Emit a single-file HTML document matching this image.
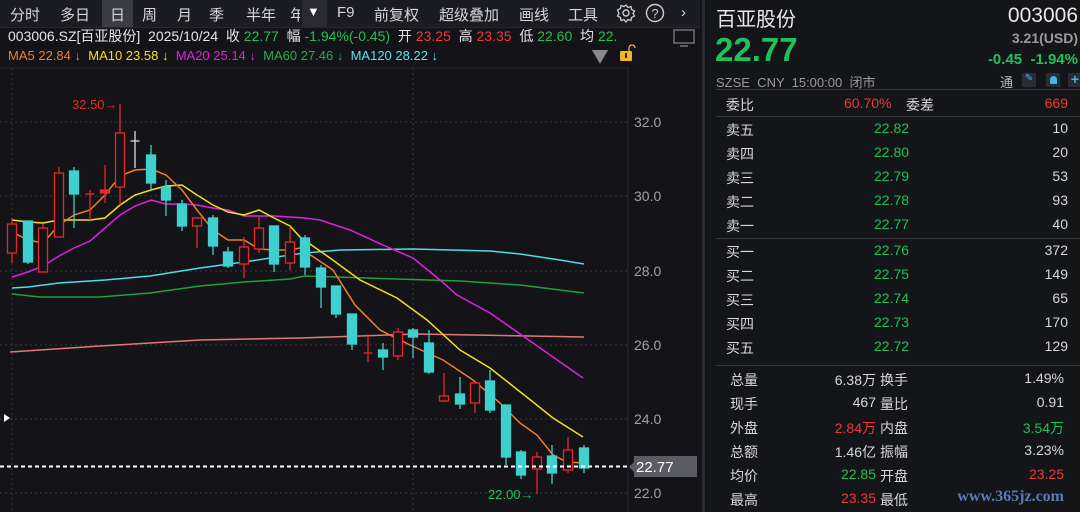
<!DOCTYPE html>
<html><head><meta charset="utf-8">
<style>
*{margin:0;padding:0;box-sizing:border-box}
body{width:1080px;height:512px;background:#131318;overflow:hidden;position:relative;font-family:"Liberation Sans","Noto Sans CJK SC",sans-serif;color:#d8d8dc}
.a{position:absolute;white-space:nowrap}
.tb{position:absolute;left:0;top:0;width:700px;height:27px;background:#1b1c21;font-size:15px;color:#d6d6da}
.tb span{position:absolute;top:4px}
.g{color:#1fc15a}.r{color:#f0373a}.w{color:#e6e6e9}.gr{color:#9a9aa0}
.rp{position:absolute;left:706px;top:0;width:374px;height:512px;background:#141519}
.row{position:absolute;left:20px;width:342px;height:24px;font-size:14px}
.row span{position:absolute;top:2px}
</style></head><body>
<div class="tb">
<div class="a" style="left:102px;top:0;width:31px;height:27px;background:#3b3c44"></div>
<span style="left:10px">分时</span><span style="left:60px">多日</span><span style="left:110px">日</span><span style="left:142px">周</span><span style="left:177px">月</span><span style="left:209px">季</span><span style="left:246px">半年</span><span style="left:290px;width:10px;overflow:hidden">年</span>
<div class="a" style="left:302px;top:0;width:25px;height:27px;background:#2a2b31"></div>
<span style="left:307px;font-size:13px;color:#fff">▼</span>
<span style="left:337px">F9</span><span style="left:374px">前复权</span><span style="left:439px">超级叠加</span><span style="left:519px">画线</span><span style="left:568px">工具</span>
<svg class="a" style="left:616px;top:3px" width="20" height="20" viewBox="0 0 20 20"><circle cx="10" cy="10" r="3" fill="none" stroke="#ccc" stroke-width="1.4"/><path d="M10 2l2 2.5 3-1 .5 3 3 1.5-1.5 2.5 1.5 2.5-3 1.5-.5 3-3-1-2 2.5-2-2.5-3 1-.5-3-3-1.5 1.5-2.5L1.5 7l3-1.5.5-3 3 1z" fill="none" stroke="#ccc" stroke-width="1.3"/></svg>
<svg class="a" style="left:645px;top:3px" width="20" height="20"><circle cx="10" cy="10" r="8.5" fill="none" stroke="#ccc" stroke-width="1.4"/><text x="10" y="15" font-size="13" text-anchor="middle" fill="#ccc" font-family="Liberation Sans">?</text></svg>
<span style="left:681px">›</span>
</div>
<div class="a" style="left:0;top:27px;width:700px;height:1px;background:#26272c"></div>
<div class="a" style="left:8px;top:26px;font-size:14px;color:#e6e6e9">003006.SZ[百亚股份] &nbsp;2025/10/24 &nbsp;收 <span class="g">22.77</span> &nbsp;幅 <span class="g">-1.94%(-0.45)</span> &nbsp;开 <span class="r">23.25</span> &nbsp;高 <span class="r">23.35</span> &nbsp;低 <span class="g">22.60</span> &nbsp;均 <span class="g">22.</span></div>
<div class="a" style="left:8px;top:48px;font-size:13px"><span style="color:#f07f2a">MA5 22.84 ↓</span>&nbsp; <span style="color:#f0e020">MA10 23.58 ↓</span>&nbsp; <span style="color:#e020e0">MA20 25.14 ↓</span>&nbsp; <span style="color:#20b050">MA60 27.46 ↓</span>&nbsp; <span style="color:#50e8f0">MA120 28.22 ↓</span></div>
<svg class="a" style="left:0;top:0" width="705" height="512">
<polygon points="592,50 608,50 600,64" fill="#888"/>
<rect x="620" y="51" width="12" height="10" rx="1" fill="#f0b428"/><path d="M629 51v-3a3 3 0 0 1 6 0" fill="none" stroke="#f0b428" stroke-width="1.3"/><rect x="625" y="53" width="2" height="5" fill="#3a2a00"/>
<rect x="674" y="30" width="20" height="13" fill="none" stroke="#888" stroke-width="1.2"/><path d="M680 46h8" stroke="#888" stroke-width="1.3"/>
<line x1="0" y1="68" x2="628" y2="68" stroke="#26272c"/>
<line x1="628" y1="68" x2="628" y2="512" stroke="#2a2b30"/>
<line x1="703.5" y1="0" x2="703.5" y2="512" stroke="#2a2b30" stroke-width="3"/>
<g stroke="#3a3b42" stroke-dasharray="2,3" stroke-width="1">
<line x1="0" y1="122" x2="628" y2="122"/><line x1="0" y1="196" x2="628" y2="196"/><line x1="0" y1="271" x2="628" y2="271"/><line x1="0" y1="345" x2="628" y2="345"/><line x1="0" y1="419" x2="628" y2="419"/><line x1="0" y1="493" x2="628" y2="493"/>
<line x1="12" y1="68" x2="12" y2="512"/><line x1="413" y1="68" x2="413" y2="512"/>
</g>
<g font-size="14" fill="#a0a0a6" font-family="Liberation Sans"><text x="634" y="127">32.0</text><text x="634" y="201">30.0</text><text x="634" y="276">28.0</text><text x="634" y="350">26.0</text><text x="634" y="424">24.0</text><text x="634" y="498">22.0</text></g>
<g fill="none" stroke-width="1.5">
<polyline stroke="#e07878" points="10,352 100,346 200,340 300,338 417,334 584,337"/>
<polyline stroke="#1fa040" points="12,294 40,297 100,297 150,293 200,286 244,282 290,279 305,276 460,281 520,285 584,293"/>
<polyline stroke="#50dce8" points="12,288 28,287 59,283 105,280 150,276 200,268 244,262 290,255 305,253 340,250 413,249 490,251 520,254 560,260 584,264"/>
<polyline stroke="#e020e0" points="12,277 28,272 43,266 59,256 74,248 90,241 105,228 120,215 135,206 151,200 166,204 182,204 197,205 213,208 228,210 244,216 259,216 274,216 290,217 305,218 320,220 350,230 383,245 413,258 440,280 457,295 490,313 533,343 583,378"/>
<polyline stroke="#f0e020" points="12,220 28,222 43,223 59,220 74,220 90,220 105,218 120,205 135,195 151,190 166,186 182,185 197,195 213,205 228,212 244,215 259,210 274,218 290,226 300,237 330,258 360,280 397,298 427,320 460,350 490,368 533,402 553,418 583,437"/>
<polyline stroke="#f07f2a" points="12,232 28,240 43,243 59,225 74,215 90,210 105,195 120,176 135,170 151,169 166,175 182,190 197,210 213,230 228,240 244,240 259,249 274,250 290,250 300,248 333,270 355,305 380,330 410,345 443,360 473,380 500,403 520,423 537,435 553,455 567,462 583,463"/>
</g>
<g stroke="#3ecfcf" fill="#3ecfcf" stroke-width="1.3">
<line x1="28" y1="221" x2="28" y2="264"/><rect x="23.5" y="221" width="9" height="41"/>
<line x1="74" y1="167" x2="74" y2="228"/><rect x="69.5" y="171" width="9" height="23"/>
<line x1="151" y1="145" x2="151" y2="189"/><rect x="146.5" y="155" width="9" height="28"/>
<line x1="166" y1="180" x2="166" y2="216"/><rect x="161.5" y="187" width="9" height="13"/>
<line x1="182" y1="200" x2="182" y2="231"/><rect x="177.5" y="204" width="9" height="22"/>
<line x1="213" y1="215" x2="213" y2="255"/><rect x="208.5" y="218" width="9" height="28"/>
<line x1="228" y1="247" x2="228" y2="268"/><rect x="223.5" y="252" width="9" height="14"/>
<line x1="274" y1="226" x2="274" y2="272"/><rect x="269.5" y="226" width="9" height="38"/>
<line x1="305" y1="235" x2="305" y2="275"/><rect x="300.5" y="238" width="9" height="29"/>
<line x1="321" y1="265" x2="321" y2="308"/><rect x="316.5" y="268" width="9" height="19"/>
<line x1="336" y1="286" x2="336" y2="318"/><rect x="331.5" y="286" width="9" height="28"/>
<line x1="352" y1="314" x2="352" y2="350"/><rect x="347.5" y="314" width="9" height="30"/>
<line x1="383" y1="343" x2="383" y2="370"/><rect x="378.5" y="350" width="9" height="7"/>
<line x1="413" y1="328" x2="413" y2="358"/><rect x="408.5" y="330" width="9" height="7"/>
<line x1="429" y1="330" x2="429" y2="374"/><rect x="424.5" y="343" width="9" height="29"/>
<line x1="460" y1="377" x2="460" y2="409"/><rect x="455.5" y="394" width="9" height="10"/>
<line x1="490" y1="370" x2="490" y2="413"/><rect x="485.5" y="381" width="9" height="29"/>
<line x1="506" y1="405" x2="506" y2="465"/><rect x="501.5" y="405" width="9" height="52"/>
<line x1="521" y1="450" x2="521" y2="479"/><rect x="516.5" y="452" width="9" height="23"/>
<line x1="552" y1="445" x2="552" y2="484"/><rect x="547.5" y="456" width="9" height="17"/>
<line x1="584" y1="445" x2="584" y2="473"/><rect x="579.5" y="448" width="9" height="20"/>
</g>
<g stroke="#e8282b" fill="#131318" stroke-width="1.3">
<line x1="12" y1="218" x2="12" y2="263"/><rect x="7.5" y="224" width="9" height="29"/>
<line x1="43" y1="224" x2="43" y2="272"/><rect x="38.5" y="228" width="9" height="44"/>
<line x1="59" y1="167" x2="59" y2="237"/><rect x="54.5" y="173" width="9" height="64"/>
<line x1="90" y1="190" x2="90" y2="220"/><line x1="85.5" y1="194" x2="94.5" y2="194"/>
<line x1="105" y1="165" x2="105" y2="203"/><rect x="100.5" y="190" width="9" height="3" fill="#e8282b"/>
<line x1="120" y1="104" x2="120" y2="205"/><rect x="115.5" y="133" width="9" height="54"/>
<line x1="197" y1="217" x2="197" y2="248"/><rect x="192.5" y="218" width="9" height="8"/>
<line x1="244" y1="237" x2="244" y2="278"/><rect x="239.5" y="247" width="9" height="17"/>
<line x1="259" y1="217" x2="259" y2="253"/><rect x="254.5" y="228" width="9" height="21"/>
<line x1="290" y1="228" x2="290" y2="270"/><rect x="285.5" y="242" width="9" height="21"/>
<line x1="368" y1="334" x2="368" y2="362"/><line x1="363.5" y1="353" x2="372.5" y2="353"/>
<line x1="398" y1="328" x2="398" y2="360"/><rect x="393.5" y="332" width="9" height="24"/>
<line x1="444" y1="373" x2="444" y2="402"/><rect x="439.5" y="396" width="9" height="5"/>
<line x1="475" y1="383" x2="475" y2="413"/><rect x="470.5" y="383" width="9" height="20"/>
<line x1="537" y1="452" x2="537" y2="494"/><rect x="532.5" y="457" width="9" height="12"/>
<line x1="568" y1="437" x2="568" y2="473"/><rect x="563.5" y="450" width="9" height="20"/>
</g>
<line x1="135" y1="131" x2="135" y2="168" stroke="#ddd" stroke-width="1.3"/><line x1="130.5" y1="141" x2="139.5" y2="141" stroke="#ddd" stroke-width="1.3"/>
<text x="72" y="109" font-size="13" fill="#e8282b" font-family="Liberation Sans">32.50→</text>
<text x="488" y="499" font-size="13" fill="#1fc15a" font-family="Liberation Sans">22.00→</text>
<line x1="0" y1="466.5" x2="632" y2="466.5" stroke="#fff" stroke-width="2" stroke-dasharray="4,3"/>
<polygon points="629,467 634,462 634,472" fill="#5a5b63"/>
<rect x="634" y="456" width="63" height="21" fill="#5a5b63"/>
<text x="636" y="472" font-size="15" fill="#fff" font-family="Liberation Sans">22.77</text>
<polygon points="4,414 10,418 4,422" fill="#fff"/>
</svg>
<div class="rp">
<div class="a" style="left:10px;top:3px;font-size:20px;color:#e8e8ea">百亚股份</div>
<div class="a" style="right:2px;top:4px;font-size:21px;color:#e8e8ea">003006</div>
<div class="a" style="left:9px;top:31px;font-size:33px;font-weight:bold;color:#1fc15a">22.77</div>
<div class="a gr" style="right:2px;top:30px;font-size:14px;font-weight:bold">3.21(USD)</div>
<div class="a g" style="right:2px;top:51px;font-size:15px;font-weight:bold">-0.45 &nbsp;-1.94%</div>
<div class="a gr" style="left:10px;top:72px;font-size:13px">SZSE &nbsp;CNY &nbsp;15:00:00 &nbsp;闭市</div>
<div class="a" style="left:294px;top:72px;font-size:13px;color:#bbb">通</div>
<div class="a" style="left:316px;top:73px;width:14px;height:14px;background:#2a2c33;color:#3ab8e8;font-size:10px;text-align:center">✎</div>
<div class="a" style="left:340px;top:73px;width:14px;height:14px;background:#2a2c33"><div style="margin:3px auto;width:7px;height:8px;background:#3ab8e8;border-radius:4px 4px 1px 1px"></div></div>
<div class="a" style="left:362px;top:73px;width:14px;height:14px;background:#2a2c33;color:#3ab8e8;font-size:14px;line-height:13px;text-align:center;font-weight:bold">+</div>
<div class="a" style="left:10px;top:89px;width:364px;height:1px;background:#33343a"></div>
<div class="row" style="top:93px"><span style="left:0">委比</span><span class="r" style="left:118px">60.70%</span><span style="left:180px">委差</span><span class="r" style="right:0">669</span></div>
<div class="a" style="left:10px;top:116px;width:364px;height:1px;background:#33343a"></div>
<div class="row" style="top:118px"><span>卖五</span><span class="g" style="left:148px">22.82</span><span style="right:0">10</span></div>
<div class="row" style="top:142px"><span>卖四</span><span class="g" style="left:148px">22.80</span><span style="right:0">20</span></div>
<div class="row" style="top:166px"><span>卖三</span><span class="g" style="left:148px">22.79</span><span style="right:0">53</span></div>
<div class="row" style="top:190px"><span>卖二</span><span class="g" style="left:148px">22.78</span><span style="right:0">93</span></div>
<div class="row" style="top:214px"><span>卖一</span><span class="g" style="left:148px">22.77</span><span style="right:0">40</span></div>
<div class="a" style="left:10px;top:238px;width:364px;height:1px;background:#33343a"></div>
<div class="row" style="top:240px"><span>买一</span><span class="g" style="left:148px">22.76</span><span style="right:0">372</span></div>
<div class="row" style="top:264px"><span>买二</span><span class="g" style="left:148px">22.75</span><span style="right:0">149</span></div>
<div class="row" style="top:288px"><span>买三</span><span class="g" style="left:148px">22.74</span><span style="right:0">65</span></div>
<div class="row" style="top:312px"><span>买四</span><span class="g" style="left:148px">22.73</span><span style="right:0">170</span></div>
<div class="row" style="top:336px"><span>买五</span><span class="g" style="left:148px">22.72</span><span style="right:0">129</span></div>
<div class="a" style="left:10px;top:365px;width:364px;height:1px;background:#33343a"></div>
<div class="row" style="top:368px;left:24px;width:334px"><span>总量</span><span style="right:188px">6.38万</span><span style="left:150px">换手</span><span style="right:0">1.49%</span></div>
<div class="row" style="top:392px;left:24px;width:334px"><span>现手</span><span style="right:188px">467</span><span style="left:150px">量比</span><span style="right:0">0.91</span></div>
<div class="row" style="top:416px;left:24px;width:334px"><span>外盘</span><span class="r" style="right:188px">2.84万</span><span style="left:150px">内盘</span><span class="g" style="right:0">3.54万</span></div>
<div class="row" style="top:440px;left:24px;width:334px"><span>总额</span><span style="right:188px">1.46亿</span><span style="left:150px">振幅</span><span style="right:0">3.23%</span></div>
<div class="row" style="top:464px;left:24px;width:334px"><span>均价</span><span class="g" style="right:188px">22.85</span><span style="left:150px">开盘</span><span class="r" style="right:0">23.25</span></div>
<div class="row" style="top:488px;left:24px;width:334px"><span>最高</span><span class="r" style="right:188px">23.35</span><span style="left:150px">最低</span><span style="right:0;font-family:'Liberation Serif',serif;font-weight:bold;color:#5a7ab8;font-size:16px;top:0">www.365jz.com</span></div>
</div>
</body></html>
